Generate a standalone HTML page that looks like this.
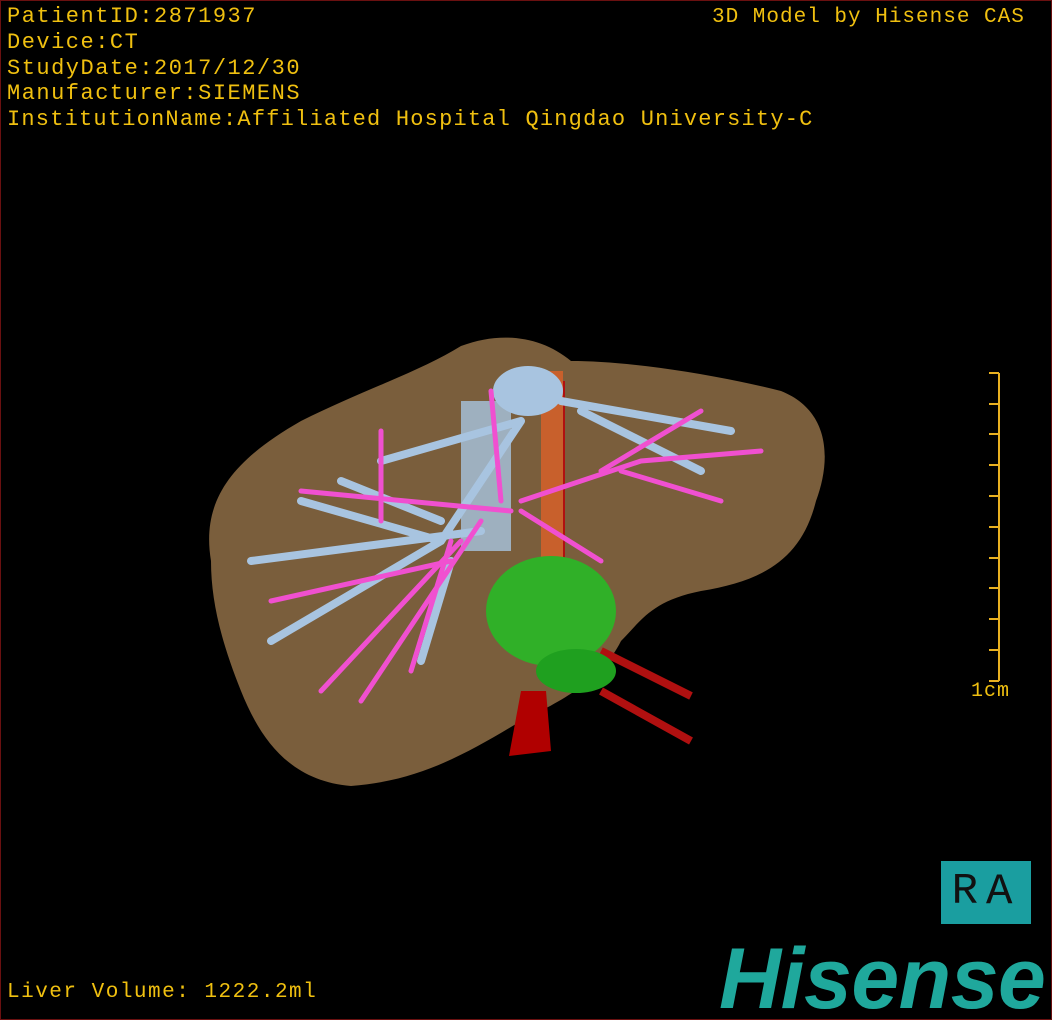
<!DOCTYPE html>
<html><head><meta charset="utf-8"><style>
html,body{margin:0;padding:0;background:#000;}
#c{position:relative;width:1050px;height:1018px;border:1px solid #6a1010;background:#000;overflow:hidden;font-family:"Liberation Mono",monospace;color:#f0c010;}
.t{position:absolute;left:6px;font-size:22px;letter-spacing:1.5px;line-height:25px;white-space:pre;}
</style></head><body><div id="c">
<div class="t" style="top:3px">PatientID:2871937</div>
<div class="t" style="top:29px">Device:CT</div>
<div class="t" style="top:55px">StudyDate:2017/12/30</div>
<div class="t" style="top:80px">Manufacturer:SIEMENS</div>
<div class="t" style="top:106px;letter-spacing:1.2px">InstitutionName:Affiliated Hospital Qingdao University-C</div>
<div class="t" style="top:4px;left:711px;font-size:21px;letter-spacing:1px">3D Model by Hisense CAS</div>
<div class="t" style="top:979px;font-size:21px;letter-spacing:1.5px">Liver Volume: 1222.2ml</div>
<svg width="1050" height="1018" style="position:absolute;left:0;top:0">
<path d="M210 560 C200 500 230 460 300 420 C360 390 420 370 460 345 C500 330 540 335 570 360 C620 360 700 370 780 390 C830 410 830 460 815 500 C800 560 760 580 700 590 C650 600 640 620 620 640 C600 680 560 700 520 720 C470 750 420 780 350 785 C290 780 260 740 240 690 C220 640 210 600 210 560 Z" fill="#7a5e3c"/>
<path d="M520 690 L545 690 L550 750 L508 755 Z" fill="#b00000"/>
<path d="M600 650 L690 695 M600 690 L690 740 M560 560 L560 380" stroke="#b01010" stroke-width="8" fill="none"/>
<rect x="540" y="370" width="22" height="200" fill="#c8602c"/>
<rect x="460" y="400" width="50" height="150" fill="#a8c4e0" opacity="0.8"/>
<ellipse cx="527" cy="390" rx="35" ry="25" fill="#a8c4e0"/>
<g stroke="#a8c4e0" stroke-width="8" fill="none" stroke-linecap="round">
<path d="M520 420 L440 540 L270 640 M440 540 L300 500 M450 560 L420 660 M480 530 L250 560 M520 420 L380 460 M560 400 L730 430 M580 410 L700 470 M440 520 L340 480"/>
</g>
<g stroke="#f050d0" stroke-width="5" fill="none" stroke-linecap="round">
<path d="M510 510 L300 490 M480 520 L360 700 M460 540 L320 690 M450 560 L270 600 M500 500 L490 390 M520 500 L640 460 L760 450 M600 470 L700 410 M450 540 L410 670 M380 520 L380 430 M620 470 L720 500 M520 510 L600 560"/>
</g>
<ellipse cx="550" cy="610" rx="65" ry="55" fill="#30b028"/>
<ellipse cx="575" cy="670" rx="40" ry="22" fill="#1fa01f"/>
<g stroke="#e8b020" stroke-width="2">
<line x1="998" y1="372" x2="998" y2="680"/>
<line x1="988" y1="372" x2="998" y2="372"/><line x1="988" y1="403" x2="998" y2="403"/><line x1="988" y1="433" x2="998" y2="433"/><line x1="988" y1="464" x2="998" y2="464"/><line x1="988" y1="495" x2="998" y2="495"/><line x1="988" y1="526" x2="998" y2="526"/><line x1="988" y1="557" x2="998" y2="557"/><line x1="988" y1="587" x2="998" y2="587"/><line x1="988" y1="618" x2="998" y2="618"/><line x1="988" y1="649" x2="998" y2="649"/><line x1="988" y1="680" x2="998" y2="680"/>
</g>
</svg>
<div class="t" style="top:678px;left:970px;font-size:20px;letter-spacing:1px">1cm</div>
<div style="position:absolute;left:940px;top:860px;width:90px;height:63px;background:#1a9ea0;color:#111;font-family:'Liberation Mono',monospace;font-size:44px;line-height:63px;text-align:center;letter-spacing:8px">RA</div>
<div style="position:absolute;left:718px;top:930px;font-family:'Liberation Sans',sans-serif;font-weight:bold;font-style:italic;font-size:86px;line-height:96px;color:#1fa89c;letter-spacing:-0.5px">Hisense</div>
</div></body></html>
